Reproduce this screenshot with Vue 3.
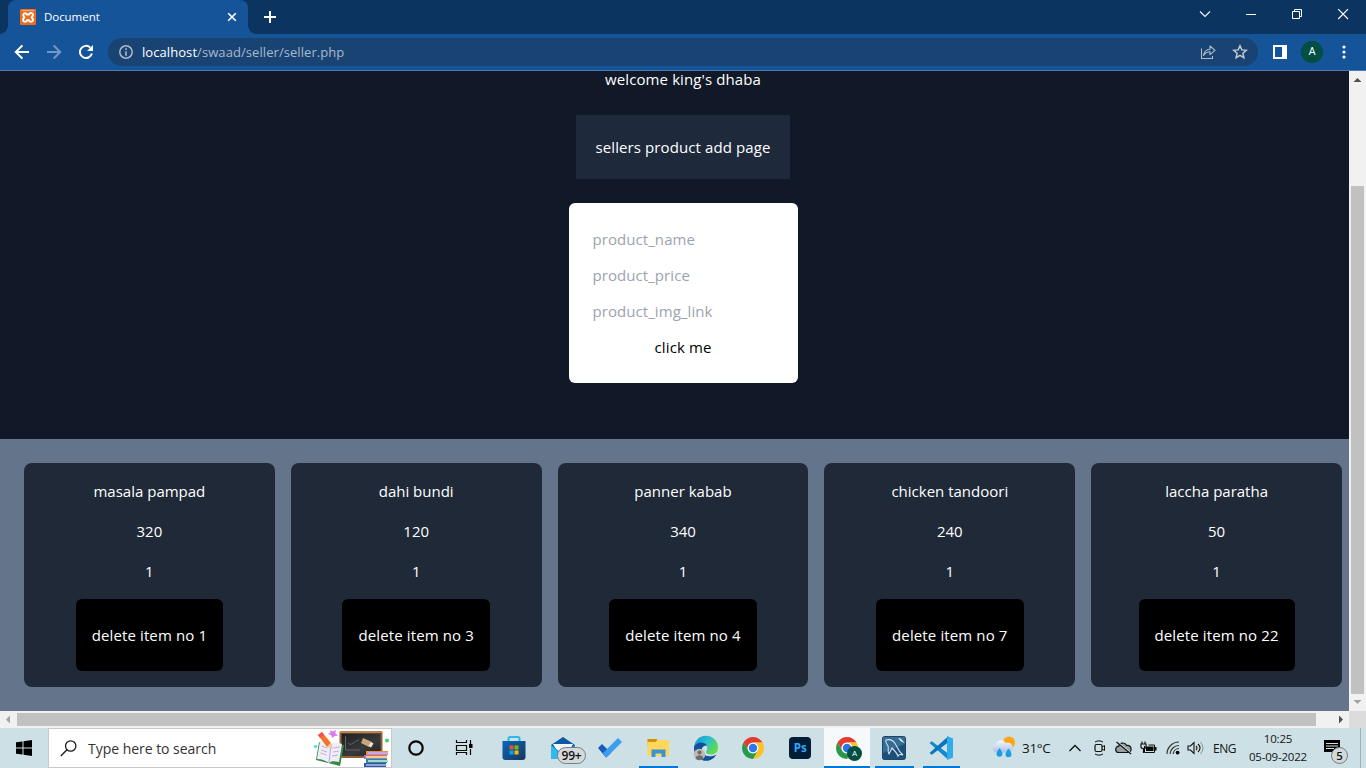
<script setup>
const fields = ['product_name', 'product_price', 'product_img_link']
const products = [
  { name: 'masala pampad', price: 320, id: 1 },
  { name: 'dahi bundi', price: 120, id: 3 },
  { name: 'panner kabab', price: 340, id: 4 },
  { name: 'chicken tandoori', price: 240, id: 7 },
  { name: 'laccha paratha', price: 50, id: 22 }
]
</script>

<template>
  <div class="screen">
    <header class="tabstrip">
      <div class="tab">
        <svg class="favicon" width="16" height="16" viewBox="0 0 16 16">
          <rect width="16" height="16" rx="1" fill="#ee6c1b" />
          <path d="M2 1.5h12" stroke="#f8b98c" stroke-width=".8" />
          <path d="M5.2 4.2a2 2 0 0 0-1.400 3.400l.6.8-.6.8a2 2 0 1 0 3.200 2h2a2 2 0 1 0 3.200-2l-.6-.8.6-.8a2 2 0 1 0-3.200-2H7a2 2 0 0 0-1.800-1.400z" fill="none" stroke="#fff" stroke-width="1.900" stroke-linejoin="round" />
        </svg>
        <span class="tab-title">Document</span>
        <svg class="tab-close" width="10" height="10" viewBox="0 0 10 10"><path d="M1.200 1.200l7.600 7.600M8.800 1.200L1.200 8.800" stroke="#fff" stroke-width="1.600" /></svg>
      </div>
      <svg class="newtab" width="14" height="14" viewBox="0 0 14 14"><path d="M7 1v12M1 7h12" stroke="#fff" stroke-width="2" /></svg>
      <div class="wincontrols">
        <svg width="46" height="28" viewBox="0 0 46 28"><path d="M18 11.500l5 5 5-5" fill="none" stroke="#f2f5f9" stroke-width="1.100" /></svg>
        <svg width="46" height="28" viewBox="0 0 46 28"><path d="M18 14.500h10" stroke="#fff" /></svg>
        <svg width="46" height="28" viewBox="0 0 46 28"><path d="M18.500 11.500h7v7h-7zM20.500 11.500v-2h7v7h-2" fill="none" stroke="#fff" /></svg>
        <svg width="46" height="28" viewBox="0 0 46 28"><path d="M18.200 9.200l9.800 9.800M28 9.200l-9.800 9.800" stroke="#fff" stroke-width="1.200" /></svg>
      </div>
    </header>

    <div class="toolbar">
      <svg class="nav" width="16" height="16" viewBox="0 0 16 16"><path d="M15 8H2M8.400 1.400L1.800 8l6.600 6.600" fill="none" stroke="#fff" stroke-width="2" /></svg>
      <svg class="nav" width="16" height="16" viewBox="0 0 16 16"><path d="M1 8h13M7.600 1.400L14.200 8l-6.600 6.600" fill="none" stroke="#7399c8" stroke-width="2" /></svg>
      <svg class="nav" width="16" height="16" viewBox="0 0 16 16"><path d="M13.900 9.600A6.100 6.100 0 1 1 12.300 3.600" fill="none" stroke="#fff" stroke-width="2" /><path d="M15 1v6H9z" fill="#fff" /></svg>
      <div class="omnibox">
        <svg class="info" width="14" height="14" viewBox="0 0 14 14"><circle cx="7" cy="7" r="6.200" fill="none" stroke="#abb9ca" stroke-width="1.500" /><path d="M7 3.300v1.600M7 6.200v4.500" stroke="#abb9ca" stroke-width="1.600" /></svg>
        <span class="url"><b>localhost</b>/swaad/seller/seller.php</span>
        <svg class="share" width="16" height="16" viewBox="0 0 16 16"><path d="M1.500 4.500v10h11v-2.500M3.600 11.500C4.200 7.200 6.800 5.400 10 5.200V2l5 4.400-5 4.300V7.800c-2.800 0-4.700 1-6.400 3.700z" fill="none" stroke="#b3bdc9" stroke-width="1.100" stroke-linejoin="round" /></svg>
        <svg class="star" width="16" height="16" viewBox="0 0 16 16"><path d="M8 1.800l1.800 4.100 4.500.4-3.400 3 1 4.400L8 11.400l-3.900 2.300 1-4.400-3.400-3 4.500-.4z" fill="none" stroke="#c3cad1" stroke-width="1.500" stroke-linejoin="miter" /></svg>
      </div>
      <svg class="panel" width="14" height="14" viewBox="0 0 14 14"><path d="M0 0h14v14H0zM2 2v10h7V2z" fill="#fff" fill-rule="evenodd" /></svg>
      <span class="avatar">A</span>
      <svg class="menu" width="4" height="14" viewBox="0 0 4 14"><g fill="#fff"><circle cx="2" cy="2" r="1.600" /><circle cx="2" cy="7" r="1.600" /><circle cx="2" cy="12" r="1.600" /></g></svg>
    </div>

    <div class="viewport">
      <main class="page">
        <section class="top">
          <p class="line">welcome king's dhaba</p>
          <div class="banner">sellers product add page</div>
          <form class="form">
            <span v-for="f in fields" :key="f" class="field">{{ f }}</span>
            <span class="submit">click me</span>
          </form>
        </section>
        <section class="products">
          <article v-for="p in products" :key="p.id" class="card">
            <p>{{ p.name }}</p>
            <p>{{ p.price }}</p>
            <p>1</p>
            <div class="delete">delete item no {{ p.id }}</div>
          </article>
        </section>
      </main>
      <div class="vscroll">
        <svg width="17" height="17" viewBox="0 0 17 17"><path d="M4.500 11h8L8.500 7z" fill="#505050" /></svg>
        <div class="vthumb"></div>
        <svg width="17" height="17" viewBox="0 0 17 17"><path d="M4.500 6h8l-4 4z" fill="#a3a3a3" /></svg>
      </div>
      <div class="hscroll">
        <svg width="17" height="17" viewBox="0 0 17 17"><path d="M10 4.500v8L6 8.500z" fill="#a3a3a3" /></svg>
        <div class="hthumb"></div>
        <svg width="17" height="17" viewBox="0 0 17 17"><path d="M7 4.500v8l4-4z" fill="#505050" /></svg>
      </div>
      <div class="corner"></div>
    </div>

    <footer class="taskbar">
      <div class="start">
        <svg width="16" height="16" viewBox="0 0 16 16"><path d="M0 2.300L6.500 1.400V7.500H0zM7.500 1.200L16 0v7.500H7.500zM0 8.500h6.500v6.100L0 13.700zM7.500 8.500H16V16l-8.500-1.200z" /></svg>
      </div>
      <div class="search">
        <svg class="lens" width="17" height="17" viewBox="0 0 17 17"><circle cx="10.700" cy="6" r="5.200" fill="none" stroke="#1b1b1b" stroke-width="1.300" /><path d="M7 9.800L.8 16" stroke="#1b1b1b" stroke-width="1.400" /></svg>
        <span class="search-text">Type here to search</span>
        <svg class="school" width="78" height="38" viewBox="0 0 78 38">
          <defs><linearGradient id="slate" x2="1" y2="1"><stop stop-color="#1d1f20" /><stop offset=".6" stop-color="#37393a" /><stop offset="1" stop-color="#1d1f20" /></linearGradient></defs>
          <rect x="26.500" y="2" width="43" height="27" rx="1.500" fill="#966036" /><path d="M27 3h42" stroke="#c9925a" stroke-width="1.500" />
          <rect x="28.500" y="4.500" width="39" height="22.500" fill="url(#slate)" />
          <path d="M32.500 7v14H47M35 14c3 4 6-2 11-3" fill="none" stroke="#62676a" />
          <path d="M50 9l9 4-3 5-8-4z" fill="#c8a477" /><path d="M58 13l2.500 1.500-2.500 4-2.500-1.500z" fill="#f0e7d8" />
          <path d="M6 13l12 4 13-1-4 21L3 31z" fill="#358b42" />
          <path d="M7 12c5 0 9 1 11 3 3-2 7-2 11 0l-3 18c-5-1-8-1-10 1-3-2-7-4-12-4z" fill="#f0ecfa" />
          <path d="M18 15l-2 19" stroke="#b8a3dd" /><path d="M8.500 17l6 2m-6.500 2l6 2m-6.500 1l6 2m7-7l6-1m-6.500 5l6-1m-7 5l6-1" stroke="#bbb4c9" />
          <path d="M5 6l4-3 9 11-4 4z" fill="#f4742e" /><path d="M5 6l4-3 2 3-4 3z" fill="#ef554e" /><path d="M14 18l4-4 2 6z" fill="#efc89b" />
          <path d="M17 1l2.500 1.500L23 1l-.8 3L25 6.500l-3.500.5-2 2-1.500-3-3-1 2.500-1.500z" fill="#d879ef" />
          <circle cx="2.500" cy="17.500" r="1.800" fill="#68d8ec" /><circle cx="74" cy="11.500" r="1.900" fill="#43c96b" />
          <path d="M53 22h22v4H53z" fill="#ef8e37" /><path d="M55 23h20v2H55z" fill="#c8a7f1" />
          <path d="M51 26h23v4H51z" fill="#a674d4" /><path d="M53 27h21v2H53z" fill="#f8ca8c" />
          <path d="M53 30h21v4H53z" fill="#268c8c" /><path d="M55 31h20v2H55z" fill="#a5dbcf" />
          <path d="M51 34h22v4H51z" fill="#3458a6" /><path d="M53 35h20v2H53z" fill="#8f9fe0" />
        </svg>
      </div>

      <div class="apps">
        <div class="app"><svg width="48" height="40" viewBox="0 0 48 40"><circle cx="24" cy="20" r="6.700" fill="none" stroke="#080808" stroke-width="2.200" /></svg></div>
        <div class="app"><svg width="48" height="40" viewBox="0 0 48 40"><path d="M16.500 12v2.500h10V12M16.500 27v-2.500h10V27M16.500 17.500h10v5h-10zM30.500 12v4M30.500 21v6" fill="none" stroke="#080808" stroke-width="1.200" /><path d="M29 16h3.500v4H29z" /></svg></div>
        <div class="app store"><svg width="48" height="40" viewBox="0 0 48 40">
          <defs><linearGradient id="bag" x2="1" y2="1"><stop stop-color="#0767bd" /><stop offset="1" stop-color="#1b365c" /></linearGradient></defs>
          <path d="M18.500 14v-3.500c0-1 .6-1.500 1.500-1.500h8c.9 0 1.500.5 1.500 1.500V14" fill="none" stroke="#2bb9ea" stroke-width="2" /><path d="M12.500 13h23v16c0 2-1 3-3 3h-17c-2 0-3-1-3-3z" fill="url(#bag)" />
          <path d="M19.500 17.500h4v4h-4z" fill="#f25022" /><path d="M24.500 17.500h4v4h-4z" fill="#7fba00" /><path d="M19.500 22.500h4v4h-4z" fill="#00a4ef" /><path d="M24.500 22.500h4v4h-4z" fill="#ffb900" /></svg></div>
        <div class="app mail"><svg width="48" height="40" viewBox="0 0 48 40"><path d="M12 17l12-8 12 8v4H12z" fill="#0c59a4" /><path d="M14 16h20l-5 9H19z" fill="#f2f7fc" /><path d="M12 17l12 9 12-9v14H12z" fill="#2a98df" /><path d="M12 17v14h13z" fill="#32b8ef" /></svg><span class="mail-badge">99+</span></div>
        <div class="app"><svg width="48" height="40" viewBox="0 0 48 40"><path d="M12 20l4-4 9 9-5 4.500z" fill="#195abd" /><path d="M16.500 25.500L32 10l4 4-15.500 15.500z" fill="#3c9ced" /></svg></div>
        <div class="app"><svg width="48" height="40" viewBox="0 0 48 40"><path d="M13.500 11h9l2 3v3h-11z" fill="#d69000" /><path d="M13.500 14h8l2-2H34c.6 0 1 .4 1 1v15H13.500z" fill="#ffd65b" /><path d="M17.500 29v-7.500h14V29h-4v-3.500h-6V29z" fill="#3a91d5" /></svg><i class="bar"></i></div>
        <div class="app edge"><svg width="48" height="40" viewBox="0 0 48 40">
          <defs><linearGradient id="wave" x2="1" y2=".6"><stop stop-color="#168fd5" /><stop offset=".5" stop-color="#29bdd5" /><stop offset="1" stop-color="#64dc46" /></linearGradient></defs>
          <path d="M12 20a12 12 0 0 1 24-.5c0 4.500-3 7-7 7-3.500 0-5-1.500-5-2.500s1.300-1.500 1.300-4c0-3-3-5-6.500-5-4 0-6.800 2.800-6.800 5z" fill="url(#wave)" />
          <path d="M12 20c0-3 3-5.500 7-5.500 2.500 0 5 1 6 3-4-.5-6 3-5 6 1.500 5 7.500 6 14.400 3.200A12 12 0 0 1 12 20z" fill="#10509c" />
          <circle cx="17.500" cy="26.500" r="5.700" fill="#bdbab7" /><circle cx="17.500" cy="24.500" r="2.100" fill="#706b69" /><path d="M13.500 30.500c.4-4.500 7.600-4.500 8 0-2 2.200-6 2.200-8 0z" fill="#706b69" /></svg></div>
        <div class="app chrome"><svg width="48" height="40" viewBox="0 0 48 40"><g transform="translate(24 20)"><path d="M-9.500-5.500A11 11 0 0 1 9.500-5.500H0A5.500 5.500 0 0 0-4.800 2.700z" fill="#e33b2e" /><path d="M-9.500-5.500A11 11 0 0 1 9.500-5.500H0A5.500 5.500 0 0 0-4.800 2.700z" fill="#fcc31e" transform="rotate(120)" /><path d="M-9.500-5.500A11 11 0 0 1 9.500-5.500H0A5.500 5.500 0 0 0-4.800 2.700z" fill="#26994a" transform="rotate(240)" /><circle r="5.300" fill="#fff" /><circle r="4.200" fill="#2b76e8" /></g></svg></div>
        <div class="app ps"><span class="ps-tile">Ps</span></div>
        <div class="app active"><svg width="48" height="40" viewBox="0 0 48 40"><g transform="translate(24 20)"><path d="M-9.500-5.500A11 11 0 0 1 9.500-5.500H0A5.500 5.500 0 0 0-4.800 2.700z" fill="#e33b2e" /><path d="M-9.500-5.500A11 11 0 0 1 9.500-5.500H0A5.500 5.500 0 0 0-4.800 2.700z" fill="#fcc31e" transform="rotate(120)" /><path d="M-9.500-5.500A11 11 0 0 1 9.500-5.500H0A5.500 5.500 0 0 0-4.800 2.700z" fill="#26994a" transform="rotate(240)" /><circle r="5.300" fill="#fff" /><circle r="4.200" fill="#2b76e8" /></g></svg><span class="mini-avatar">A</span><i class="bar"></i></div>
        <div class="app"><svg width="48" height="40" viewBox="0 0 48 40"><rect x="12.500" y="8.500" width="23" height="23" rx="2" fill="#356d97" stroke="#1c4568" /><path d="M12.500 25l22.500-9v14c0 1-1 1.500-2 1.500H14c-1 0-1.500-.5-1.500-1.500z" fill="#1d5078" /><path d="M16 12c4-1 8 1 10 5 2 3 2 6 7 10-3-1-4-1-5 1-1-3-5-7-6-8l-3 6c-2-3 0-5-1-8-1-2-3-3-2-6z" fill="none" stroke="#d7e3ed" stroke-width="1.100" /><path d="M28 10l2.500.5L33 13l1.500 2-3.500-1.500z" fill="#e4edf3" /></svg><i class="bar"></i></div>
        <div class="app vs"><svg width="48" height="40" viewBox="0 0 48 40"><path d="M12.500 15l2.300-1.700L31 25.500V31.500z" fill="#1388cf" /><path d="M12.500 25l2.300 1.700L31 14.500V8.500z" fill="#0876ba" /><path d="M30 8l6 2.500v19L30 32z" fill="#2faceb" /></svg><i class="bar"></i></div>
      </div>

      <div class="tray">
        <svg class="weather" width="24" height="24" viewBox="0 0 24 24">
          <defs><linearGradient id="puff" x2="0" y2="1"><stop stop-color="#f6f8fe" /><stop offset="1" stop-color="#a9bfe8" /></linearGradient></defs>
          <circle cx="17" cy="6.500" r="6" fill="#ffa414" /><path d="M4.500 16.500a4 4 0 0 1-.8-7.800C4.500 3.500 11.500 3 13.500 7c3.500-1.200 7.500 1 7.300 4.800 0 2.700-1.800 4.700-4 4.700z" fill="url(#puff)" />
          <path d="M7.500 12c2 2.800 3 4.300 3 5.800a3 3 0 0 1-6 0c0-1.500 1-3 3-5.800zM16.500 12.500c2 2.800 3 4.300 3 5.800a3 3 0 0 1-6 0c0-1.500 1-3 3-5.800z" fill="#1c9ce2" /></svg>
        <span class="temp">31°C</span>
        <svg class="chev" width="12" height="8" viewBox="0 0 12 8"><path d="M.5 7L6 1.500 11.500 7" fill="none" stroke="#111" stroke-width="1.300" /></svg>
        <svg class="cam" width="12" height="16" viewBox="0 0 12 16"><rect x="1" y="4.500" width="7" height="7" rx="1.500" fill="none" stroke="#111" stroke-width="1.200" /><path d="M8 7l2.500-1.500v5L8 9M1 2c2-1.500 6-1.500 8 0M1 14c2 1.500 6 1.500 8 0" fill="none" stroke="#111" /></svg>
        <svg class="cloud" width="17" height="14" viewBox="0 0 17 14"><path d="M4 11.500a3.200 3.200 0 0 1-.2-6.400C4.500 1.500 10 .8 11.600 4.400c3-.4 4.600 1.500 4.500 3.600 0 2-1.400 3.500-3.100 3.500z" fill="#96a09f" stroke="#111" stroke-width="1.200" /><path d="M2.500 1l13 11" stroke="#ccdfe3" stroke-width="1.800" /><path d="M1.500 1L16 13" stroke="#111" stroke-width="1.200" /></svg>
        <svg class="battery" width="17" height="14" viewBox="0 0 17 14"><path d="M4.500 5v6.500h10V4h-6" fill="none" stroke="#111" /><path d="M6 5.500h7.500V10H6zM15 6h1.500v3.500H15z" fill="#050505" /><path d="M1 3h5v3c0 2-5 2-5 0zM2 .5V3M5 .5V3M3.500 7v5" fill="none" stroke="#111" stroke-width="1.200" /></svg>
        <svg class="wifi" width="14" height="14" viewBox="0 0 14 14"><path d="M1 13A12 12 0 0 1 13 1M4 13a9 9 0 0 1 9-8.500M7.200 13A6 6 0 0 1 13 7.500" fill="none" stroke="#303436" stroke-width="1.200" /><circle cx="11.600" cy="11.600" r="1.900" /></svg>
        <svg class="sound" width="17" height="14" viewBox="0 0 17 14"><path d="M1 5h2.500L7 1.500v11L3.500 9H1z" fill="none" stroke="#111" stroke-width="1.100" /><path d="M9 5q2 2 0 4M11 3q4 4 0 8" fill="none" stroke="#111" stroke-width="1.100" /><path d="M13.500 1q5 6 0 12" fill="none" stroke="#8c9798" /></svg>
        <span class="lang">ENG</span>
        <div class="clock"><span>10:25</span><span class="date">05-09-2022</span></div>
        <div class="notice"><svg width="16" height="16" viewBox="0 0 16 16"><path d="M0 0h16v12h-5v3.500L7.500 12H0z" /><path d="M2 3.500h12M2 6h12M2 8.500h8" stroke="#cce0e5" /></svg><span>5</span></div>
      </div>
    </footer>
  </div>
</template>

<style>
body { margin: 0; overflow: hidden; }
</style>

<style scoped>
* { box-sizing: border-box; }
p { margin: 0; }
svg { display: block; flex: none; }
.screen { width: 1366px; height: 768px; display: flex; flex-direction: column; overflow: hidden; font-family: "Open Sans", "Noto Sans", sans-serif; white-space: nowrap; }
.tabstrip { height: 34px; flex: none; display: flex; background: #0b3560; }
.tab { position: relative; width: 240px; height: 34px; margin-left: 8px; padding: 0 11px 0 12px; display: flex; align-items: center; border-radius: 8px 8px 0 0; background: #155499; color: #fff; }
.tab::before, .tab::after { content: ""; position: absolute; bottom: 0; width: 8px; height: 8px; }
.tab::before { left: -8px; background: radial-gradient(circle at 0 0, transparent 7.5px, #155499 8px); }
.tab::after { right: -8px; background: radial-gradient(circle at 100% 0, transparent 7.5px, #155499 8px); }
.tab-title { margin-left: 8px; font-size: 11.500px; line-height: 16px; letter-spacing: -.05px; }
.tab-close { margin-left: auto; }
.newtab { margin: 10px 0 0 15px; }
.wincontrols { margin-left: auto; display: flex; }
.toolbar { height: 37px; flex: none; display: flex; align-items: center; padding-left: 14px; background: #155499; border-bottom: 1px solid #4a7cb3; }
.nav { margin-right: 16px; }
.omnibox { width: 1150px; height: 28px; margin-left: -2px; border-radius: 14px; background: #194373; display: flex; align-items: center; padding: 0 10px 0 11px; }
.url { margin-left: 9px; font-size: 13px; line-height: 20px; color: #a7b9cd; letter-spacing: .07px; }
.url b { font-weight: 400; color: #fff; }
.share { margin-left: auto; }
.star { margin-left: 16px; }
.panel { margin-left: 15px; }
.avatar { width: 22px; height: 22px; margin-left: 14px; border-radius: 50%; background: #014e42; color: #fff; text-align: center; font: 11px/22px Roboto, sans-serif; }
.menu { margin-left: 19px; }

.viewport { height: 657px; flex: none; display: grid; grid-template: 640px 17px / 1349px 17px; }
.page { overflow: hidden; font-size: 15px; line-height: 24px; color: #fff; }
.top { width: 1366px; height: 368px; display: flex; flex-direction: column; align-items: center; gap: 24px; background: #111827; }
.line { height: 20px; line-height: 17px; letter-spacing: .1px; }
.banner { width: 214px; height: 64px; padding: 20px 0; text-align: center; background: #1e293b; border-radius: 1px; letter-spacing: .1px; }
.form { width: 229px; height: 180px; padding: 24px; display: flex; flex-direction: column; gap: 12px; background: #fff; border-radius: 6px; }
.field { color: #9ca3af; letter-spacing: .07px; }
.submit { color: #000; text-align: center; letter-spacing: .1px; }
.products { width: 1366px; height: 272px; padding: 24px; display: grid; grid-template-columns: repeat(5, 1fr); gap: 16px; background: #64748b; }
.card { padding: 16px; display: flex; flex-direction: column; align-items: center; gap: 16px; border-radius: 8px; background: #1f2937; }
.delete { height: 72px; padding: 24px 16px; border-radius: 6px; background: #000; letter-spacing: .12px; }
.vscroll { display: flex; flex-direction: column; background: #f1f1f1; }
.vthumb { width: 13px; height: 508px; margin: 98px 2px 0; background: #c1c1c1; }
.hscroll { display: flex; align-items: center; background: #f1f1f1; }
.hthumb { width: 1299px; height: 13px; margin-right: 16px; background: #c1c1c1; }
.corner { background: #dcdcdc; }

.taskbar { height: 40px; flex: none; display: flex; background: #cce0e5; }
.start { width: 48px; padding: 12px 16px; }
.search { width: 344px; height: 40px; display: flex; align-items: center; padding-left: 11px; background: #fff; border: 1px solid #c6caca; }
.search-text { margin-left: 11px; color: #333; font-size: 14px; letter-spacing: -.03px; }
.school { margin: 0 0 0 auto; }
.apps { display: flex; }
.app { position: relative; width: 48px; height: 40px; display: flex; justify-content: center; }
.store { width: 51px; }
.mail { width: 47px; }
.edge { width: 47.500px; }
.chrome { width: 47px; }
.ps { width: 47.500px; align-items: center; }
.active, .vs { width: 46px; }
.active { background: #f5f9fa; }
.bar { position: absolute; bottom: 0; left: 5px; right: 4px; height: 2px; background: #0078d7; }
.active .bar { left: 0; right: 0; }
.mail-badge { position: absolute; left: 18px; top: 19px; width: 29px; height: 17px; border: 1px solid #777f83; border-radius: 9px; background: #d4dadc; color: #111; font-size: 12px; font-weight: 600; line-height: 15px; letter-spacing: -.2px; text-align: center; }
.ps-tile { width: 22px; height: 22px; border-radius: 4px; background: #001e36; color: #31a8ff; font-size: 11.500px; line-height: 21px; font-weight: 700; text-align: center; }
.mini-avatar { position: absolute; left: 23px; top: 18px; width: 15px; height: 15px; border-radius: 50%; background: #014e42; color: #fff; text-align: center; font: 8px/15px Roboto, sans-serif; }
.tray { width: 402px; display: flex; align-items: center; padding-left: 28px; color: #151515; }
.temp { width: 30px; margin-left: 6px; font-size: 13.500px; letter-spacing: -.3px; }
.chev { margin-left: 17px; }
.cam { margin-left: 13px; }
.cloud { margin-left: 9px; }
.battery { margin-left: 8px; }
.wifi { margin-left: 9px; }
.sound { margin-left: 7px; }
.lang { width: 24px; margin-left: 9px; font-size: 12px; letter-spacing: -.5px; }
.clock { width: 60px; margin-left: 11px; display: flex; flex-direction: column; align-items: center; font-size: 11.500px; line-height: 18px; letter-spacing: -.2px; }
.notice { position: relative; height: 40px; width: 37px; margin-left: 16px; padding-top: 12px; border-right: 1px solid #9eb1b5; }
.notice span { position: absolute; left: 7px; top: 19px; width: 17px; height: 17px; border: 1px solid #737b7e; border-radius: 50%; background: #d3d9da; font-size: 11.500px; line-height: 15px; font-weight: 600; text-align: center; }
</style>
